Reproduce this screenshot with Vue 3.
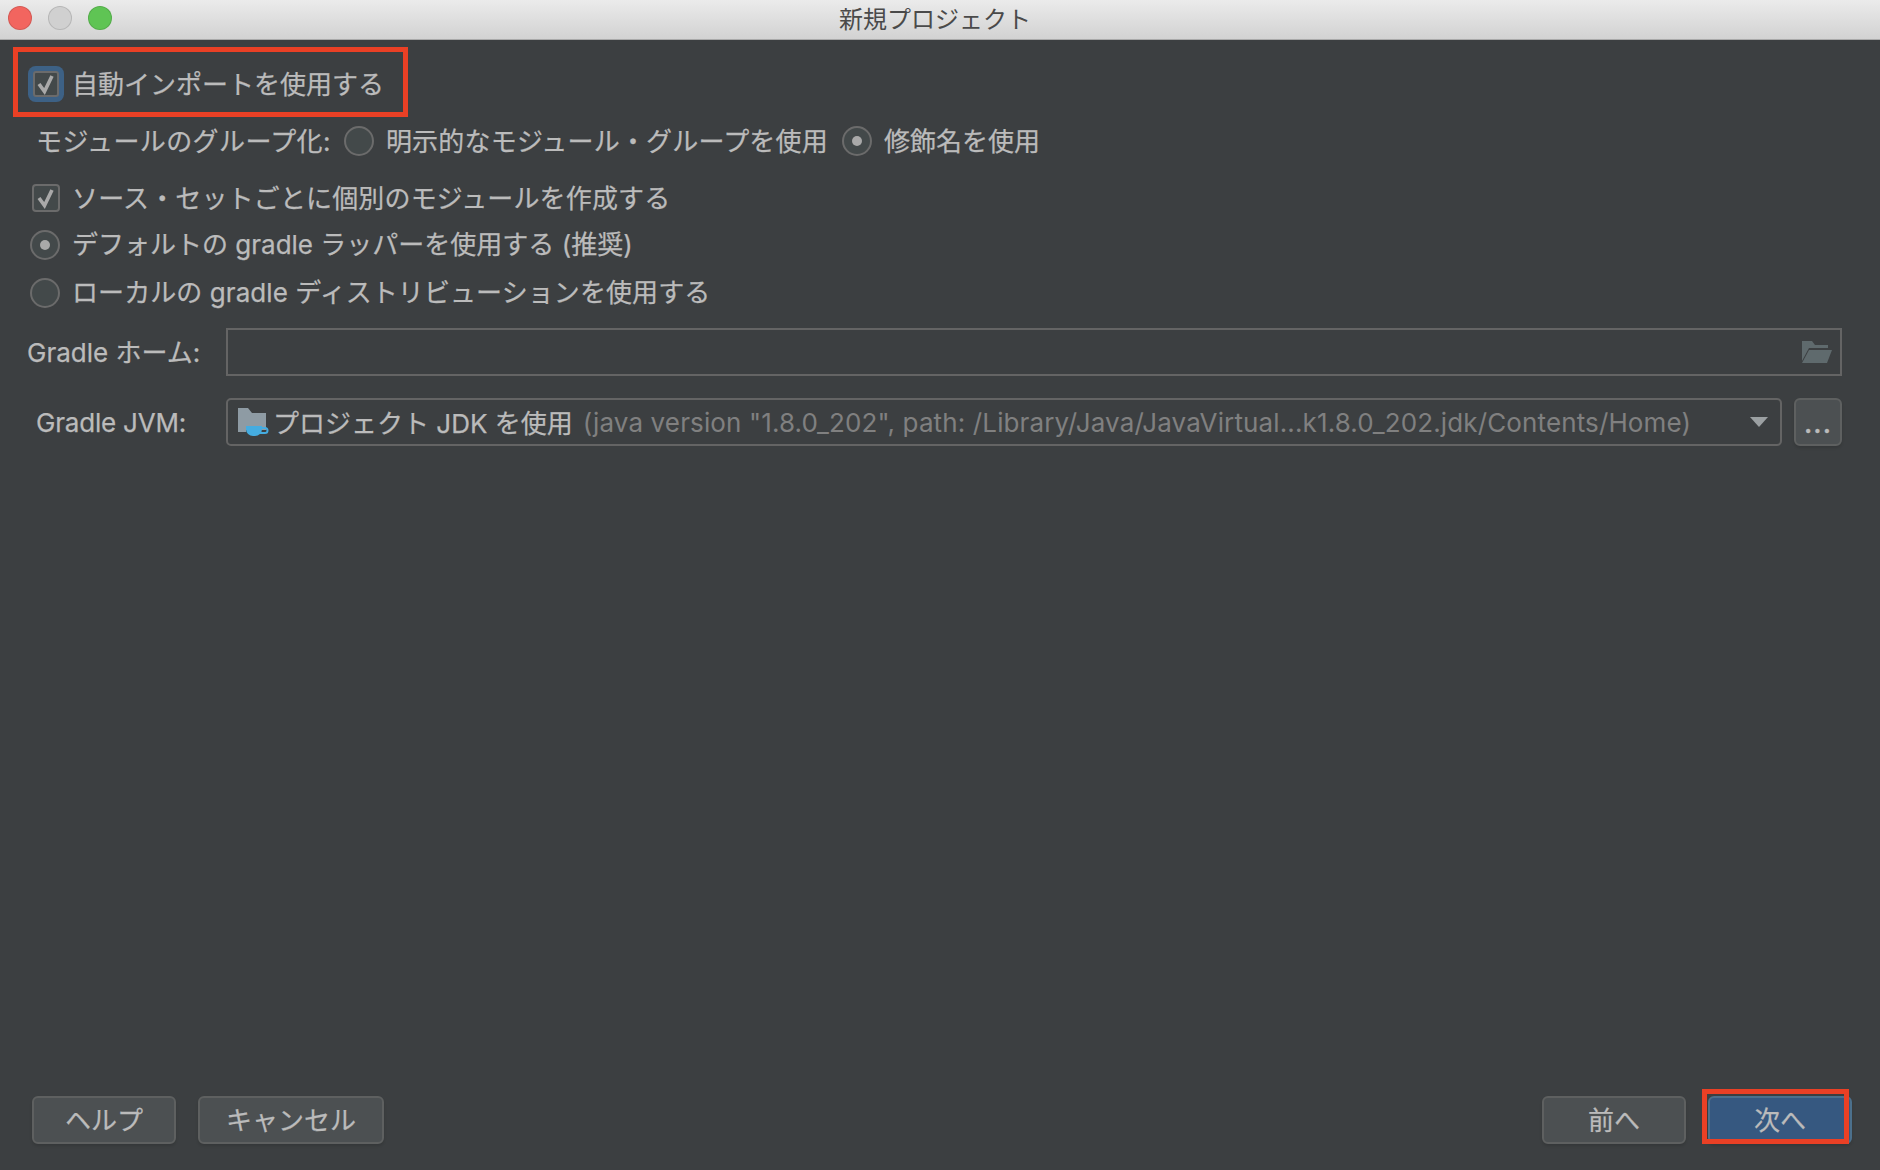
<script setup>
const path = '(java version "1.8.0_202", path: /Library/Java/JavaVirtual...k1.8.0_202.jdk/Contents/Home)'
</script>

<template>
  <div class="window">
    <header class="titlebar">
      <div class="lights">
        <span class="light red"></span>
        <span class="light gray"></span>
        <span class="light green"></span>
      </div>
      <div class="title">新規プロジェクト</div>
    </header>

    <main class="content">
      <div class="row r1">
        <span class="check focused"><svg viewBox="0 0 26 26" width="26" height="26"><path d="M6 13 L11.5 20.5 L19 5" class="tick" /></svg></span>
        <span class="label l1">自動インポートを使用する</span>
      </div>

      <div class="row r2">
        <span class="label group-label">モジュールのグループ化:</span>
        <span class="radio g1"></span>
        <span class="label g2">明示的なモジュール・グループを使用</span>
        <span class="radio on g3"><i></i></span>
        <span class="label g4">修飾名を使用</span>
      </div>

      <div class="row r3">
        <span class="check plain"><svg viewBox="0 0 26 26" width="26" height="26"><path d="M6 13 L11.5 20.5 L19 5" class="tick" /></svg></span>
        <span class="label l2">ソース・セットごとに個別のモジュールを作成する</span>
      </div>
      <div class="row r4">
        <span class="radio on"><i></i></span>
        <span class="label l3">デフォルトの gradle ラッパーを使用する (推奨)</span>
      </div>
      <div class="row r5">
        <span class="radio"></span>
        <span class="label l3 l5">ローカルの gradle ディストリビューションを使用する</span>
      </div>

      <div class="field-row f1">
        <span class="field-label home">Gradle ホーム:</span>
        <div class="input">
          <svg class="folder" viewBox="0 0 30 22" width="30" height="22">
            <path d="M0 0 H10 L13 4 H26 V7 H7 L0 20 Z" fill="#5f6a6d" />
            <path d="M7 9 H30 L25 22 H0 Z" fill="#5f6a6d" />
          </svg>
        </div>
      </div>

      <div class="field-row f2">
        <span class="field-label jvm">Gradle JVM:</span>
        <div class="select">
          <svg class="jdk" viewBox="0 0 31 29" width="31" height="29">
            <path d="M0 0 H10 L14 5 H28 V22 H8 V24 H0 Z" fill="#8e9ba4" />
            <path d="M8 18 H24 V21 A7 7 0 0 1 17 28 H15 A7 7 0 0 1 8 21 Z" fill="#45ace0" />
            <path d="M24 20 H27 A2 2 0 0 1 27 25 H22" fill="none" stroke="#45ace0" stroke-width="2" />
          </svg>
          <span class="sel-main">プロジェクト JDK を使用</span>
          <span class="sel-path">{{ path }}</span>
          <svg class="arrow" viewBox="0 0 18 10" width="18" height="10"><path d="M0 0 H18 L9 10 Z" fill="#9ba0a2" /></svg>
        </div>
        <button class="btn more"><span>...</span></button>
      </div>
    </main>

    <footer class="footer">
      <button class="btn help"><span>ヘルプ</span></button>
      <button class="btn cancel"><span>キャンセル</span></button>
      <span class="spacer"></span>
      <button class="btn prev"><span>前へ</span></button>
      <button class="btn next"><span>次へ</span></button>
    </footer>

    <div class="mark mark-top"></div>
    <div class="mark mark-next"></div>
  </div>
</template>

<style>
html, body { margin: 0; background: #3c3f41; }
</style>

<style scoped>
.window {
  position: relative;
  width: 1880px;
  height: 1170px;
  display: flex;
  flex-direction: column;
  background: #3c3f41;
  color: #bbbbbb;
  font-family: "Inter", "Noto Sans CJK JP", sans-serif;
  font-size: 26px;
  -webkit-text-stroke: 0.25px #bbbbbb;
  overflow: hidden;
}
.titlebar {
  height: 39px;
  flex: none;
  display: flex;
  align-items: center;
  justify-content: center;
  position: relative;
  background: linear-gradient(#ebebeb, #d2d2d2);
  border-bottom: 1px solid #a9a9a9;
}
.lights {
  position: absolute;
  left: 8px;
  top: 6px;
  display: flex;
  gap: 16px;
}
.light {
  width: 24px;
  height: 24px;
  border-radius: 50%;
  box-sizing: border-box;
  border: 1px solid rgba(0, 0, 0, 0.12);
}
.red { background: #f2655f; }
.gray { background: #d0d0d0; }
.green { background: #5fc454; }
.title {
  font-family: "Noto Sans CJK JP", sans-serif;
  font-size: 24px;
  color: #4a4a4a;
  -webkit-text-stroke: 0;
  padding-right: 10px;
  padding-bottom: 4px;
}
.content { flex: 1; display: flex; flex-direction: column; }
.row {
  height: 36px;
  display: flex;
  align-items: center;
  padding-left: 30px;
}
.r1 { margin-top: 26px; }
.r2 { margin-top: 21px; padding-left: 36px; }
.r3 { margin-top: 21px; }
.r4 { margin-top: 11px; }
.r5 { margin-top: 12px; }
.check {
  flex: none;
  box-sizing: border-box;
  border-radius: 4px;
  background: #43494a;
  border: 2px solid #6b6b6b;
  display: flex;
  align-items: center;
  justify-content: center;
}
.check svg { flex: none; }
.check.focused {
  width: 26px;
  height: 26px;
  margin-left: 3px;
  box-shadow: 0 0 0 5px #3d6185;
  border-radius: 3px;
}
.check.plain { width: 28px; height: 28px; margin-left: 2px; }
.tick { fill: none; stroke: #a9a9a9; stroke-width: 3.6; }
.radio {
  flex: none;
  box-sizing: border-box;
  width: 30px;
  height: 30px;
  border-radius: 50%;
  background: #43494a;
  border: 2px solid #6b6b6b;
  display: flex;
  align-items: center;
  justify-content: center;
}
.radio i {
  width: 10px;
  height: 10px;
  border-radius: 50%;
  background: #a9a9a9;
}
.label { white-space: nowrap; padding-bottom: 4px; }
.l1 { margin-left: 13px; }
.l2 { margin-left: 12px; letter-spacing: 0.15px; }
.l3 { margin-left: 12px; padding-bottom: 6px; }
.l5 { letter-spacing: 0.08px; }
.g1 { margin-left: 13px; }
.g2 { margin-left: 12px; letter-spacing: 0.2px; }
.g3 { margin-left: 14px; }
.g4 { margin-left: 12px; }
.group-label { letter-spacing: 0.4px; }
.field-row { height: 48px; display: flex; align-items: center; }
.f1 { margin-top: 17px; padding-left: 27px; }
.f2 { margin-top: 22px; padding-left: 36px; }
.field-label { white-space: nowrap; }
.home { width: 199px; flex: none; padding-bottom: 3px; }
.jvm { width: 190px; flex: none; letter-spacing: -0.2px; }
.input {
  box-sizing: border-box;
  width: 1616px;
  height: 48px;
  border: 2px solid #646464;
  display: flex;
  align-items: center;
  justify-content: flex-end;
  padding-right: 8px;
}
.select {
  box-sizing: border-box;
  width: 1556px;
  height: 48px;
  border: 2px solid #646464;
  border-radius: 5px;
  display: flex;
  align-items: center;
  padding-left: 10px;
  white-space: nowrap;
}
.jdk { flex: none; margin-right: 4px; }
.sel-main { flex: none; padding-bottom: 2px; }
.sel-path { color: #808080; -webkit-text-stroke: 0; margin-left: 10px; flex: none; letter-spacing: 0.13px; }
.arrow { margin-left: auto; margin-right: 12px; flex: none; }
.btn {
  box-sizing: border-box;
  height: 48px;
  padding: 0;
  font: inherit;
  color: #bbbbbb;
  background: #4c5052;
  border: 2px solid #5e6060;
  border-radius: 6px;
  box-shadow: 0 2px 3px rgba(0, 0, 0, 0.12);
  display: flex;
  align-items: center;
  justify-content: center;
}
.btn span { padding-bottom: 3px; }
.more {
  width: 48px;
  margin-left: 12px;
  flex: none;
  letter-spacing: 1px;
  font-weight: 600;
}
.more span { padding-bottom: 0; padding-top: 2px; }
.footer {
  flex: none;
  height: 74px;
  display: flex;
  align-items: flex-start;
  padding-left: 32px;
  padding-right: 28px;
}
.help { width: 144px; }
.cancel { width: 186px; margin-left: 22px; }
.spacer { flex: 1; }
.prev { width: 144px; }
.next {
  width: 144px;
  margin-left: 22px;
  background: #365880;
  border-color: #4c708c;
}
.mark {
  position: absolute;
  box-sizing: border-box;
  border: 5px solid #ea4025;
}
.mark-top { left: 13px; top: 47px; width: 395px; height: 70px; }
.mark-next { left: 1702px; top: 1089px; width: 147px; height: 55px; }
</style>
